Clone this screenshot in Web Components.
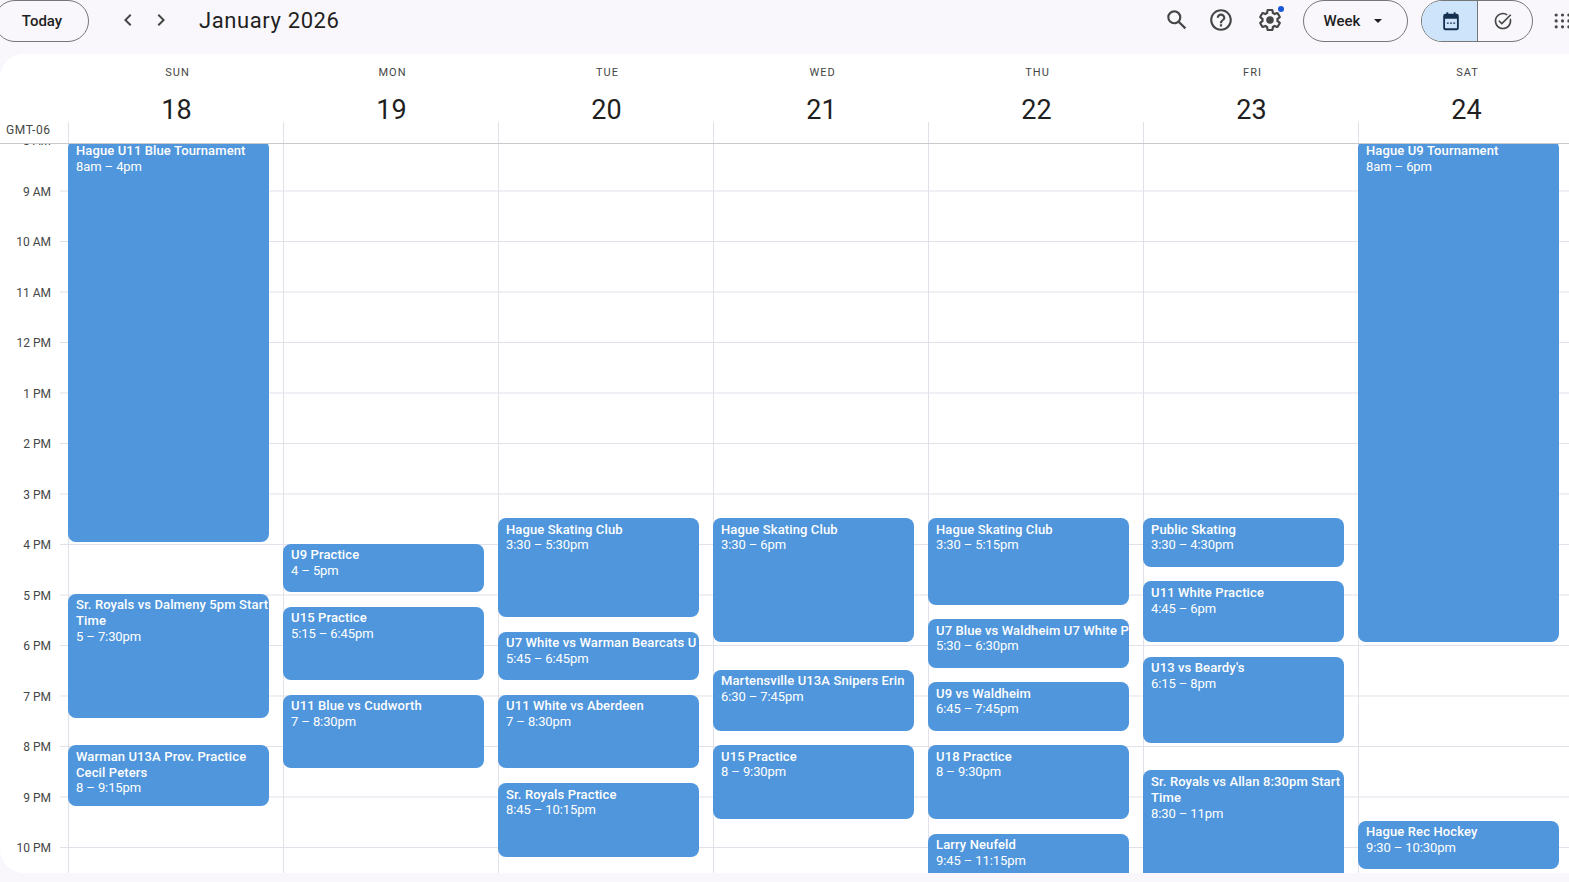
<!DOCTYPE html>
<html>
<head>
<meta charset="utf-8">
<title>Calendar</title>
<style>
	html, body { margin: 0; padding: 0; height: 100%; overflow: hidden; background: #f9f7fc; }
	body { font-family: Roboto, "Liberation Sans", sans-serif; }
</style>
</head>
<body>
<cal-app></cal-app>

<script>
const HOUR = 50.5;
const DAYS = [
	{
		name: "SUN", num: 18, events: [
			["Hague U11 Blue Tournament", "8am – 4pm", 8, 16],
			["Sr. Royals vs Dalmeny 5pm Start Time", "5 – 7:30pm", 17, 19.5],
			["Warman U13A Prov. Practice Cecil Peters", "8 – 9:15pm", 20, 21.25],
		]
	},
	{
		name: "MON", num: 19, events: [
			["U9 Practice", "4 – 5pm", 16, 17],
			["U15 Practice", "5:15 – 6:45pm", 17.25, 18.75],
			["U11 Blue vs Cudworth", "7 – 8:30pm", 19, 20.5],
		]
	},
	{
		name: "TUE", num: 20, events: [
			["Hague Skating Club", "3:30 – 5:30pm", 15.5, 17.5],
			["U7 White vs Warman Bearcats U", "5:45 – 6:45pm", 17.75, 18.75, "nowrap"],
			["U11 White vs Aberdeen", "7 – 8:30pm", 19, 20.5],
			["Sr. Royals Practice", "8:45 – 10:15pm", 20.75, 22.25],
		]
	},
	{
		name: "WED", num: 21, events: [
			["Hague Skating Club", "3:30 – 6pm", 15.5, 18],
			["Martensville U13A Snipers Erin", "6:30 – 7:45pm", 18.5, 19.75],
			["U15 Practice", "8 – 9:30pm", 20, 21.5],
		]
	},
	{
		name: "THU", num: 22, events: [
			["Hague Skating Club", "3:30 – 5:15pm", 15.5, 17.25],
			["U7 Blue vs Waldheim U7 White P", "5:30 – 6:30pm", 17.5, 18.5, "nowrap"],
			["U9 vs Waldheim", "6:45 – 7:45pm", 18.75, 19.75],
			["U18 Practice", "8 – 9:30pm", 20, 21.5],
			["Larry Neufeld", "9:45 – 11:15pm", 21.75, 23.25],
		]
	},
	{
		name: "FRI", num: 23, events: [
			["Public Skating", "3:30 – 4:30pm", 15.5, 16.5],
			["U11 White Practice", "4:45 – 6pm", 16.75, 18],
			["U13 vs Beardy's", "6:15 – 8pm", 18.25, 20],
			["Sr. Royals vs Allan 8:30pm Start Time", "8:30 – 11pm", 20.5, 23],
		]
	},
	{
		name: "SAT", num: 24, events: [
			["Hague U9 Tournament", "8am – 6pm", 8, 18, "fade"],
			["Hague Rec Hockey", "9:30 – 10:30pm", 21.5, 22.5],
		]
	},
];
const HOURS = ["8 AM", "9 AM", "10 AM", "11 AM", "12 PM", "1 PM", "2 PM", "3 PM", "4 PM", "5 PM", "6 PM", "7 PM", "8 PM", "9 PM", "10 PM"];

class CalIcon extends HTMLElement
{
	static get paths ()
	{
		return {
			prev: `<path d="M15.4 7.4 14 6l-6 6 6 6 1.4-1.4L10.8 12z"/>`,
			next: `<path d="M8.6 16.6 10 18l6-6-6-6-1.4 1.4 4.6 4.6z"/>`,
			search: `<path d="M20.49 19l-5.73-5.73C15.53 12.2 16 10.91 16 9.5A6.5 6.5 0 1 0 9.5 16c1.41 0 2.7-.47 3.77-1.24L19 20.49 20.49 19zM5 9.5C5 7.01 7.01 5 9.5 5S14 7.01 14 9.5 11.99 14 9.5 14 5 11.99 5 9.5z"/>`,
			help: `<path d="M11 18h2v-2h-2v2zm1-16C6.48 2 2 6.48 2 12s4.48 10 10 10 10-4.48 10-10S17.52 2 12 2zm0 18c-4.41 0-8-3.59-8-8s3.59-8 8-8 8 3.59 8 8-3.59 8-8 8zm0-14c-2.21 0-4 1.79-4 4h2c0-1.1.9-2 2-2s2 .9 2 2c0 2-3 1.75-3 5h2c0-2.25 3-2.5 3-5 0-2.21-1.79-4-4-4z"/>`,
			gear: `<path d="M13.85 22.25h-3.7c-.74 0-1.36-.54-1.45-1.27l-.27-1.89c-.27-.14-.53-.29-.79-.46l-1.8.72c-.7.26-1.47-.03-1.81-.65L2.2 15.53c-.35-.66-.2-1.44.36-1.88l1.53-1.19c-.01-.15-.02-.3-.02-.46 0-.15.01-.31.02-.46l-1.52-1.19c-.59-.45-.74-1.26-.37-1.88l1.85-3.19c.34-.62 1.11-.9 1.79-.63l1.81.73c.26-.17.52-.32.78-.46l.27-1.91c.09-.7.71-1.25 1.44-1.25h3.7c.74 0 1.36.54 1.45 1.27l.27 1.89c.27.14.53.29.79.46l1.8-.72c.71-.26 1.48.03 1.82.65l1.84 3.18c.36.66.2 1.44-.36 1.88l-1.52 1.19c.01.15.02.3.02.46s-.01.31-.02.46l1.52 1.19c.56.45.72 1.23.37 1.86l-1.86 3.22c-.34.62-1.11.9-1.8.63l-1.8-.72c-.26.17-.52.32-.78.46l-.27 1.91c-.1.68-.72 1.22-1.46 1.22zm-3.23-2h2.76l.37-2.55.53-.22c.44-.18.88-.44 1.34-.78l.45-.34 2.38.96 1.38-2.4-2.03-1.58.07-.56c.03-.26.06-.51.06-.78s-.03-.53-.06-.78l-.07-.56 2.03-1.58-1.39-2.4-2.39.96-.45-.35c-.42-.32-.87-.58-1.33-.77l-.52-.22-.37-2.55h-2.76l-.37 2.55-.53.21c-.44.19-.88.44-1.34.79l-.45.33-2.38-.95-1.39 2.39 2.03 1.58-.07.56a7 7 0 0 0-.06.79c0 .26.02.53.06.78l.07.56-2.03 1.58 1.38 2.4 2.39-.96.45.35c.43.33.86.58 1.33.77l.53.22.38 2.55z"/><circle cx="12" cy="12" r="3.5"/>`,
			cal: `<path d="M7 2.5h2v2.5H7zM15 2.5h2v2.5h-2z"/><path d="M6 4h12a2.5 2.5 0 0 1 2.5 2.5v13A2.5 2.5 0 0 1 18 22H6a2.5 2.5 0 0 1-2.5-2.5v-13A2.5 2.5 0 0 1 6 4zm-.5 5.5v10a.5.5 0 0 0 .5.5h12a.5.5 0 0 0 .5-.5v-10z"/><path d="M7.5 13.5h2v1.6h-2zM11 13.5h2v1.6h-2zM14.5 13.5h2v1.6h-2z"/>`,
			task: `<path d="M22 5.18 10.59 16.6l-4.24-4.24 1.41-1.41 2.83 2.83 10-10L22 5.18zM19.79 10.22c.13.57.21 1.17.21 1.78 0 4.42-3.58 8-8 8s-8-3.58-8-8 3.58-8 8-8c1.58 0 3.04.46 4.28 1.25l1.44-1.44A9.9 9.9 0 0 0 12 2C6.48 2 2 6.48 2 12s4.48 10 10 10 10-4.48 10-10c0-1.19-.22-2.33-.6-3.39l-1.61 1.61z"/>`,
			apps: `<circle cx="4" cy="5" r="2"/><circle cx="12" cy="5" r="2"/><circle cx="20" cy="5" r="2"/><circle cx="4" cy="12.5" r="2"/><circle cx="12" cy="12.5" r="2"/><circle cx="20" cy="12.5" r="2"/><circle cx="4" cy="20" r="2"/><circle cx="12" cy="20" r="2"/><circle cx="20" cy="20" r="2"/>`,
		};
	}

	constructor ()
	{
		super();
		this.attachShadow({mode:"open"});
	}

	connectedCallback ()
	{
		let size = this.getAttribute("size") || 24;
		this.shadowRoot.innerHTML = `
			<style>
				:host { display: inline-flex; flex: none; color: inherit; }
				svg { display: block; fill: currentColor; }
			</style>
			<svg width="${size}" height="${size}" viewBox="0 0 24 24">${CalIcon.paths[this.getAttribute("name")]}</svg>
		`;
	}
}
customElements.define("cal-icon", CalIcon);

class CalTopbar extends HTMLElement
{
	constructor ()
	{
		super();
		this.attachShadow({mode:"open"});
		this.shadowRoot.innerHTML = `
			<style>
				:host {
					display: flex;
					align-items: flex-start;
					height: 54px;
					color: #444746;
				}
				.pill {
					box-sizing: border-box;
					height: 42px;
					border: 1px solid #747775;
					border-radius: 21px;
					display: flex;
					align-items: center;
					justify-content: center;
					font: 500 15px Roboto, sans-serif;
					color: #1f1f1f;
				}
				.today { width: 95px; margin-left: -6px; padding-left: 1px; }
				.nav { display: flex; gap: 9px; margin-left: 27px; margin-top: 8px; color: #444746; }
				.title {
					margin-left: 26px;
					font: 400 22px/42px Roboto, sans-serif;
					letter-spacing: .6px;
					color: #1f1f1f;
				}
				.spacer { flex: 1; }
				.tools { display: flex; align-items: flex-start; }
				.week { width: 105px; gap: 14px; margin-left: 20px; padding-right: 5px; }
				.caret { width: 0; height: 0; border: 4.5px solid transparent; border-top: 4.5px solid #1f1f1f; border-bottom: 0; }
				.tool { margin-top: 7px; position: relative; }
				.help { margin-left: 18px; }
				.gear { margin-left: 23px; margin-top: 7px; }
				.dot { position: absolute; top: -1px; right: -1px; width: 6px; height: 6px; border-radius: 50%; background: #1a56d6; }
				.switch { display: flex; align-items: stretch; width: 112px; margin-left: 13px; overflow: hidden; }
				.switch div { display: flex; align-items: center; justify-content: center; }
				.switch .on { flex: none; box-sizing: border-box; width: 56px; padding-left: 3px; background: #cde4fb; border-right: 1px solid #747775; color: #14304e; }
				.switch .off { flex: 1; padding-right: 5px; color: #444746; }
				.apps { margin-left: 20px; margin-top: 11px; margin-right: -3px; }
			</style>
			<div class="pill today">Today</div>
			<div class="nav">
				<cal-icon name="prev"></cal-icon>
				<cal-icon name="next"></cal-icon>
			</div>
			<div class="title">January 2026</div>
			<div class="spacer"></div>
			<div class="tools">
				<cal-icon class="tool" name="search" size="26"></cal-icon>
				<cal-icon class="tool help" name="help" size="26"></cal-icon>
				<span class="tool gear"><cal-icon name="gear" size="26"></cal-icon><span class="dot"></span></span>
				<div class="pill week">Week<span class="caret"></span></div>
				<div class="pill switch">
					<div class="on"><cal-icon name="cal" size="22"></cal-icon></div>
					<div class="off"><cal-icon name="task" size="20"></cal-icon></div>
				</div>
				<cal-icon class="apps" name="apps" size="19"></cal-icon>
			</div>
		`;
	}
}
customElements.define("cal-topbar", CalTopbar);

class CalDayHead extends HTMLElement
{
	constructor ()
	{
		super();
		this.attachShadow({mode:"open"});
		this.shadowRoot.innerHTML = `
			<style>
				:host {
					display: flex;
					flex-direction: column;
					align-items: center;
					box-sizing: border-box;
					padding: 12px 0 0 2px;
					height: 89px;
				}
				.name {
					padding-left: 2px;
					font: 400 11px/14px Roboto, sans-serif;
					letter-spacing: 1px;
					color: #444746;
				}
				.num {
					margin-top: 12px;
					font: 400 27px/36px Roboto, sans-serif;
					color: #1f1f1f;
				}
			</style>
			<div class="name"><slot name="name"></slot></div>
			<div class="num"><slot name="num"></slot></div>
		`;
	}
}
customElements.define("cal-day-head", CalDayHead);

class CalEvent extends HTMLElement
{
	constructor ()
	{
		super();
		this.attachShadow({mode:"open"});
		this.shadowRoot.innerHTML = `
			<style>
				:host {
					display: block;
					position: relative;
					box-sizing: border-box;
					margin: 0 14px 2px 0;
					padding: 0 0 0 8px;
					background: #4f96dc;
					border-radius: 8px;
					overflow: hidden;
					color: #fff;
					font: 13px/16px Roboto, sans-serif;
					min-height: 0;
				}
				:host([mode="nowrap"]) .title { white-space: nowrap; }
				:host([mode="fade"])::before {
					content: "";
					position: absolute;
					left: 0;
					right: 0;
					top: 3px;
					height: 1px;
					background: linear-gradient(90deg, #3a6fa8 0, #5f8fc0 50%, #fff 100%);
				}
				.title { font-weight: 500; margin-top: 3.5px; letter-spacing: .12px; }
				.time { margin-top: -.3px; letter-spacing: -.1px; }
			</style>
			<div class="title"><slot name="title"></slot></div>
			<div class="time"><slot name="time"></slot></div>
		`;
	}
}
customElements.define("cal-event", CalEvent);

class CalDayCol extends HTMLElement
{
	constructor ()
	{
		super();
		this.attachShadow({mode:"open"});
		this.shadowRoot.innerHTML = `
			<style>
				:host {
					display: grid;
					grid-template-columns: minmax(0, 1fr);
					grid-template-rows: repeat(192, ${HOUR / 12}px);
					background: linear-gradient(90deg, #e1e1ea 1px, transparent 1px);
					min-width: 0;
				}
			</style>
			<slot></slot>
		`;
	}
}
customElements.define("cal-day-col", CalDayCol);

class CalGrid extends HTMLElement
{
	constructor ()
	{
		super();
		this.attachShadow({mode:"open"});
		this.shadowRoot.innerHTML = `
			<style>
				:host {
					display: block;
					height: 819px;
					background: #fff;
					border-radius: 24px 0 0 24px;
					overflow: hidden;
				}
				.head {
					display: grid;
					grid-template-columns: 68px repeat(7, 215px);
					height: 89px;
					border-bottom: 1px solid #c8c8ce;
					position: relative;
					z-index: 2;
					background: #fff;
				}
				.tz {
					align-self: end;
					font: 12px/16px Roboto, sans-serif;
					letter-spacing: .6px;
					color: #444746;
					padding: 0 0 5px 6px;
					white-space: nowrap;
				}
				.lines { display: grid; grid-template-columns: 68px repeat(7, 215px); position: absolute; left: 0; right: 0; bottom: 0; height: 21px; pointer-events: none; }
				.lines i { border-left: 1px solid #e1e1ea; }
				.lines i:first-child { border: 0; }
				.scroll { height: 729px; overflow: hidden; }
				.canvas {
					display: grid;
					grid-template-columns: 68px repeat(7, 215px);
					margin-top: -4px;
					background-image: linear-gradient(#e1e1ea 1px, transparent 1px);
					background-size: 100% ${HOUR}px;
					background-position: 60px 0;
					background-repeat: repeat-y;
				}
				.hours { display: flex; flex-direction: column; }
				.hours div {
					height: ${HOUR}px;
					font: 12px/16px Roboto, sans-serif;
					color: #444746;
					text-align: right;
					padding-right: 17px;
					transform: translateY(-7.5px);
				}
			</style>
			<div class="head">
				<div class="tz">GMT-06</div>
				<slot name="head"></slot>
				<div class="lines"><i></i><i></i><i></i><i></i><i></i><i></i><i></i><i></i></div>
			</div>
			<div class="scroll">
				<div class="canvas">
					<div class="hours">${HOURS.map(h => `<div>${h}</div>`).join("")}</div>
					<slot name="col"></slot>
				</div>
			</div>
		`;
	}
}
customElements.define("cal-grid", CalGrid);

class CalApp extends HTMLElement
{
	constructor ()
	{
		super();
		this.attachShadow({mode:"open"});
		let heads = DAYS.map(d => `
			<cal-day-head slot="head"><span slot="name">${d.name}</span><span slot="num">${d.num}</span></cal-day-head>
		`).join("");
		let cols = DAYS.map(d => `
			<cal-day-col slot="col">${d.events.map(e => {
				let from = Math.round((e[2] - 8) * 12) + 1;
				let to = Math.round((e[3] - 8) * 12) + 1;
				// the 8am blocks sit a hair higher in the scrolled view
				let nudge = e[2] === 8 ? "margin-top:-.2px;" : "";
				return `<cal-event mode="${e[4] || ""}" style="${nudge}grid-row:${from} / ${to}"><span slot="title">${e[0]}</span><span slot="time">${e[1]}</span></cal-event>`;
			}).join("")}</cal-day-col>
		`).join("");
		this.shadowRoot.innerHTML = `
			<style>
				:host { display: block; height: 882px; overflow: hidden; background: #f9f7fc; }
			</style>
			<cal-topbar></cal-topbar>
			<cal-grid>${heads}${cols}</cal-grid>
		`;
	}
}
customElements.define("cal-app", CalApp);
</script>
</body>
</html>
